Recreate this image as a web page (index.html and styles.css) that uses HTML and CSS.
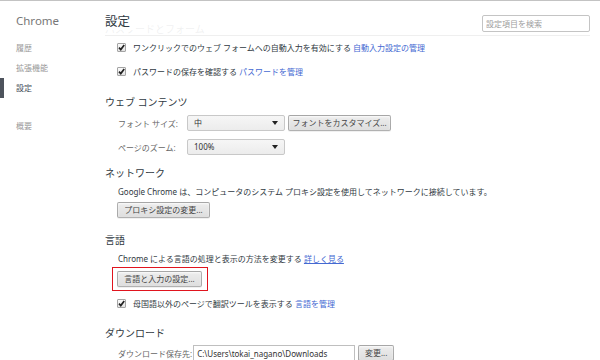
FILE: index.html
```html
<!DOCTYPE html>
<html lang="ja">
<head>
    <meta charset="UTF-8">
    <title>設定</title>
    <link rel="stylesheet" href="styles.css">
</head>
<body>
    <div class="frame">
        <nav class="side">
            <div class="brand">Chrome</div>
            <ul class="menu">
                <li>履歴</li>
                <li>拡張機能</li>
                <li class="active">設定</li>
                <li class="gap">概要</li>
            </ul>
        </nav>

        <main class="main">
            <header class="page-head">
                <h1>設定</h1>
                <input class="search" type="text" placeholder="設定項目を検索">
            </header>

            <section class="sec sec-forms">
                <h3>パスワードとフォーム</h3>
                <div class="row check-row">
                    <span class="box"><svg width="9" height="9" viewBox="0 0 9 9"><path d="M2 4.6 L3.8 6.6 L7.2 2" fill="none" stroke="#222" stroke-width="1.7"/></svg></span>
                    ワンクリックでのウェブ フォームへの自動入力を有効にする&nbsp;<a href="#">自動入力設定の管理</a>
                </div>
                <div class="row check-row">
                    <span class="box"><svg width="9" height="9" viewBox="0 0 9 9"><path d="M2 4.6 L3.8 6.6 L7.2 2" fill="none" stroke="#222" stroke-width="1.7"/></svg></span>
                    パスワードの保存を確認する&nbsp;<a href="#">パスワードを管理</a>
                </div>
            </section>

            <section class="sec sec-web">
                <h3>ウェブ コンテンツ</h3>
                <div class="row field-row">
                    <span class="label">フォント サイズ:</span>
                    <div class="select">中</div>
                    <button class="btn btn-font">フォントをカスタマイズ...</button>
                </div>
                <div class="row field-row">
                    <span class="label">ページのズーム:</span>
                    <div class="select">100%</div>
                </div>
            </section>

            <section class="sec sec-net">
                <h3>ネットワーク</h3>
                <div class="row text-row">Google Chrome は、コンピュータのシステム プロキシ設定を使用してネットワークに接続しています。</div>
                <div class="row btn-row">
                    <button class="btn btn-proxy">プロキシ設定の変更...</button>
                </div>
            </section>

            <section class="sec sec-lang">
                <h3>言語</h3>
                <div class="row text-row">Chrome による言語の処理と表示の方法を変更する&nbsp;<a class="under" href="#">詳しく見る</a></div>
                <div class="row mark-row">
                    <div class="mark">
                        <button class="btn btn-lang">言語と入力の設定...</button>
                    </div>
                </div>
                <div class="row check-row">
                    <span class="box"><svg width="9" height="9" viewBox="0 0 9 9"><path d="M2 4.6 L3.8 6.6 L7.2 2" fill="none" stroke="#222" stroke-width="1.7"/></svg></span>
                    母国語以外のページで翻訳ツールを表示する&nbsp;<a href="#">言語を管理</a>
                </div>
            </section>

            <section class="sec sec-dl">
                <h3>ダウンロード</h3>
                <div class="row dl-row">
                    <span class="dl-label">ダウンロード保存先:</span>
                    <input class="path" type="text" value="C:\Users\tokai_nagano\Downloads" readonly>
                    <button class="btn btn-change">変更...</button>
                </div>
            </section>
        </main>
    </div>
</body>
</html>
```

FILE: styles.css
```css
* { box-sizing: border-box; }
body { margin: 0; height: 360px; overflow: hidden; background: #fff; border-top: 1px solid #c3c3c3; font-family: "Noto Sans", "Noto Sans CJK JP", sans-serif; font-size: 8px; color: #303942; }
a { color: #4469d2; text-decoration: none; }
a.under { text-decoration: underline; }

.frame { display: grid; grid-template-columns: 105px 1fr; }

/* sidebar */
.brand { margin: 12px 0 0 16px; font-size: 11.5px; line-height: 16px; color: #777; }
.menu { list-style: none; margin: 9px 0 0; padding: 0; }
.menu li { height: 20px; line-height: 20px; padding-left: 16px; color: #999; }
.menu li.active { color: #464e5a; border-left: 4px solid #4d535c; padding-left: 12px; }
.menu li.gap { margin-top: 18px; }

/* main */
.main { position: relative; padding: 18px 10px 0 0; }
.page-head { position: absolute; top: 0; left: 0; right: 10px; height: 35px; padding-top: 13px; display: flex; align-items: flex-start; justify-content: space-between; border-bottom: 1px solid #efefef; background: rgba(255,255,255,0.93); }
.page-head h1 { margin: 0; padding-right: 4px; font-size: 12.5px; line-height: 16px; font-weight: normal; color: #303942; background: #fff; }
.search { width: 108px; height: 17px; margin-top: 1px; padding: 0 3px; border: 1px solid #c4c4c4; border-radius: 2px; font: inherit; font-size: 8px; color: #333; }
.search::placeholder { color: #a0a0a0; }

.sec h3 { margin: 0 0 2px; font-size: 10px; line-height: 14px; font-weight: normal; color: #303942; }
.sec-forms h3 { padding-top: 3px; }
.sec-forms .check-row:first-of-type { margin-top: -3px; }
.sec-web { margin-top: 12px; }
.sec-net { margin-top: 7px; }
.sec-lang { margin-top: 13px; }
.sec-dl { margin-top: 11px; }

.row { display: flex; align-items: center; padding-left: 13px; white-space: nowrap; }
.check-row { height: 24px; padding-left: 12px; }
.field-row { height: 24px; }
.text-row { height: 18px; }
.btn-row { height: 20px; padding-left: 12px; }
.mark-row { height: 24px; padding-left: 7px; }
.dl-row { height: 22px; }

.box { width: 9px; height: 9px; margin-right: 7px; border: 1px solid #a4a4a4; border-radius: 1px; background: linear-gradient(#fafafa, #e4e4e4); display: flex; align-items: center; justify-content: center; }
.box svg { display: block; margin: -1px; }

.label { width: 69px; color: #666; }
.select { position: relative; width: 98px; height: 16px; line-height: 14px; padding-left: 6px; border: 1px solid #c8c8c8; border-radius: 2px; background: linear-gradient(#f6f6f6, #ececec); color: #333; }
.select::after { content: ""; position: absolute; right: 6px; top: 5px; border-left: 3px solid transparent; border-right: 3px solid transparent; border-top: 4px solid #222; }

.btn { height: 16px; padding: 0; font: inherit; font-size: 8px; line-height: 14px; color: #444; text-align: center; border: 1px solid rgba(0,0,0,0.25); border-radius: 2px; background: linear-gradient(#ededed, #dedede); box-shadow: 0 1px 0 rgba(0,0,0,0.06), inset 0 1px 2px rgba(255,255,255,0.75); }
.btn-font { width: 103px; margin-left: 3px; }
.btn-proxy { width: 93px; }
.btn-lang { width: 85px; }
.btn-change { width: 36px; margin-left: 3px; }

.mark { padding: 3px 5px 3px 4px; border: 1px solid #e0141e; }

.dl-label { color: #666; margin-right: 1px; }
.path { width: 162px; height: 16px; padding: 0 3px; border: 1px solid #bfbfbf; font: inherit; font-size: 8px; color: #333; }
```
